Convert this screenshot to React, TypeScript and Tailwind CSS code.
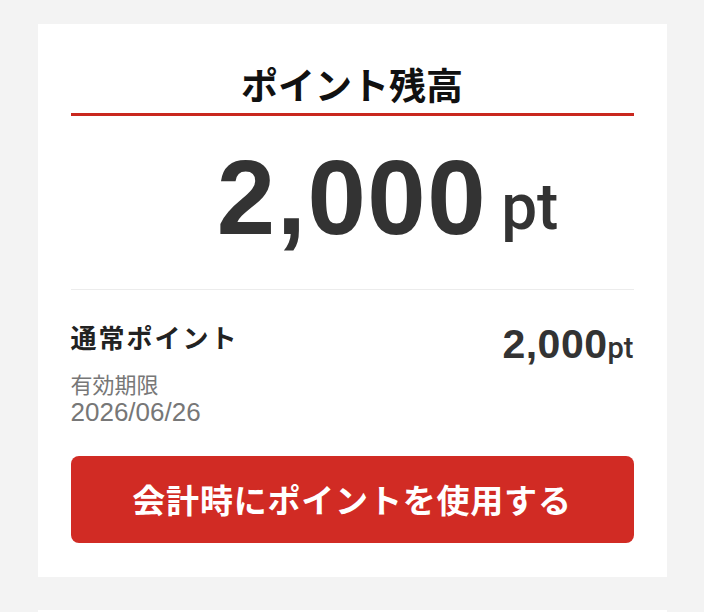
const jp = "font-['Noto_Sans_CJK_JP',sans-serif]";
const num = "font-['Liberation_Sans','Noto_Sans_CJK_JP',sans-serif]";

function PointCard() {
  return (
    <section className="mx-auto w-[629px] bg-white px-[33px] pb-[34px] pt-[40px]">
      <h2
        className={`${jp} border-b-[3px] border-[#c9271e] pb-[9px] text-center text-[37px] font-bold leading-[40px] text-[#111]`}
      >
        ポイント残高
      </h2>

      <div className="mt-[30px] grid grid-cols-[1fr_auto_1fr] items-baseline text-[#333]">
        <span />
        <span className={`${num} text-[105px] font-bold leading-[104px] tracking-[1.5px]`}>2,000</span>
        <span className={`font-['Roboto',sans-serif] ml-[14px] -translate-y-[5px] text-[64px] font-medium leading-none`}>
          pt
        </span>
      </div>

      <div className="mt-[39px] border-t border-[#ececec]" />

      <div className="mt-[31px] flex items-start justify-between">
        <div>
          <div className={`${jp} text-[26px] font-bold leading-[32px] tracking-[2px] text-[#222]`}>
            通常ポイント
          </div>
          <div className={`${num} mt-[20px] text-[22px] leading-[25px] text-[#777]`}>有効期限</div>
          <div className={`${num} text-[26px] leading-[28px] text-[#777]`}>2026/06/26</div>
        </div>
        <div className={`${num} mt-[3px] flex items-baseline text-[#333]`}>
          <span className="text-[41px] font-bold leading-[41px] tracking-[0.5px]">2,000</span>
          <span className="font-['Roboto',sans-serif] text-[29px] font-medium leading-none">pt</span>
        </div>
      </div>

      <button
        className={`${jp} mt-[30px] flex h-[87px] w-full items-center justify-center rounded-[8px] bg-[#d12b24] text-[33px] font-bold tracking-[0.8px] text-white`}
      >
        会計時にポイントを使用する
      </button>
    </section>
  );
}

export default function App() {
  return (
    <div className="h-[612px] overflow-hidden bg-[#f3f3f3] pt-[24px]">
      <PointCard />
      <div className="mx-auto mt-[33px] h-[80px] w-[629px] bg-white" />
    </div>
  );
}
